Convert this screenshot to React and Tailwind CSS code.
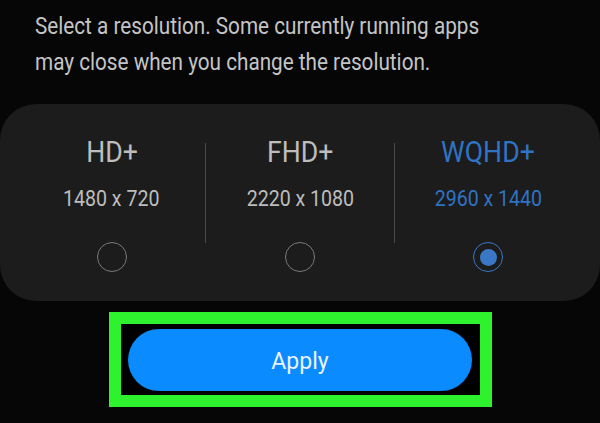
import React from "react";

const options = [
  { name: "HD+", size: "1480 x 720" },
  { name: "FHD+", size: "2220 x 1080" },
  { name: "WQHD+", size: "2960 x 1440", selected: true },
];

const Radio = ({ checked }) =>
  checked ? (
    <div className="w-[30px] h-[30px] rounded-full border-[1.5px] border-[#3a78c6] flex items-center justify-center">
      <div className="w-[17px] h-[17px] rounded-full bg-[#3a78c6]" />
    </div>
  ) : (
    <div className="w-[30px] h-[30px] rounded-full border-[1.5px] border-[#7a7a7a]" />
  );

const Option = ({ opt }) => (
  <div className="w-[188px] flex flex-col items-center pt-[34px] pb-[29px]">
    <div
      className={`text-[29px] leading-[29px] scale-x-[0.92] ${
        opt.selected ? "text-[#2f73c4]" : "text-[#bdbdbd]"
      }`}
    >
      {opt.name}
    </div>
    <div
      className={`mt-[21px] text-[22px] leading-[22px] scale-x-[0.89] ${
        opt.selected ? "text-[#2f73c4]" : "text-[#bdbdbd]"
      }`}
    >
      {opt.size}
    </div>
    <div className="mt-[32px]">
      <Radio checked={opt.selected} />
    </div>
  </div>
);

export default function App() {
  return (
    <div
      className="w-[600px] h-[423px] bg-[#060606] overflow-hidden"
      style={{ fontFamily: "Roboto, 'Noto Sans', sans-serif" }}
    >
      <div className="pt-[9px] px-[35px] text-[23px] leading-[36px] text-[#c4c4c4] whitespace-nowrap">
        <div className="origin-left scale-x-[0.9]">
          Select a resolution. Some currently running apps
        </div>
        <div className="origin-left scale-x-[0.9]">
          may close when you change the resolution.
        </div>
      </div>

      <div className="mt-[23px] h-[197px] rounded-[36px] bg-[#1c1c1c] flex px-[18px]">
        {options.map((opt, i) => (
          <React.Fragment key={opt.name}>
            {i > 0 && <div className="w-px h-[100px] mt-[39px] bg-[#4a4a4a]" />}
            <Option opt={opt} />
          </React.Fragment>
        ))}
      </div>

      <div className="mt-[11px] flex justify-center">
        <div className="w-[383px] h-[95px] border-[12px] border-[#2ef22e] bg-black flex items-center justify-center">
          <button className="w-[344px] h-[62px] rounded-full bg-[#0a8bff] text-[23px] text-[#eaf3ff] pt-[6px]">
            Apply
          </button>
        </div>
      </div>
    </div>
  );
}
